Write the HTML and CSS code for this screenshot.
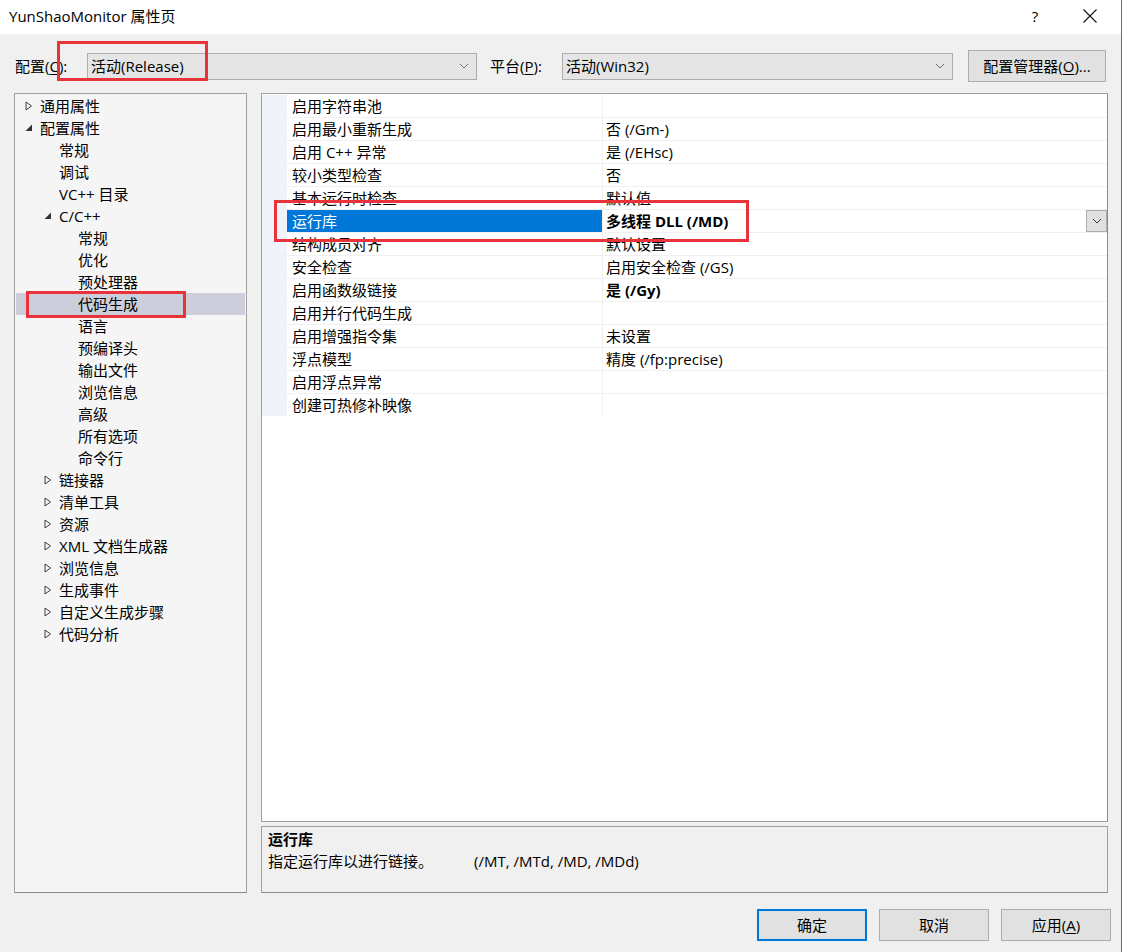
FILE: index.html
```html
<!DOCTYPE html>
<html lang="zh-CN">
<head>
<meta charset="utf-8">
<title>YunShaoMonitor 属性页</title>
<link rel="stylesheet" href="styles.css">
</head>
<body>
<div class="window">
  <div class="titlebar">
    <span class="title">YunShaoMonitor 属性页</span>
    <span class="tb-help">?</span>
    <span class="tb-close"><svg width="16" height="16" viewBox="0 0 16 16"><path d="M1.5 1.5 L14.5 14.5 M14.5 1.5 L1.5 14.5" stroke="#111" stroke-width="1.1" fill="none"/></svg></span>
  </div>

  <div class="toolbar">
    <span class="lbl">配置(<u>C</u>):</span>
    <div class="combo combo-config"><span class="combo-text">活动(Release)</span><svg class="chev" width="10" height="6" viewBox="0 0 10 6"><path d="M1 1 L5 5 L9 1" stroke="#707070" stroke-width="1" fill="none"/></svg></div>
    <span class="lbl lbl-platform">平台(<u>P</u>):</span>
    <div class="combo combo-platform"><span class="combo-text">活动(Win32)</span><svg class="chev" width="10" height="6" viewBox="0 0 10 6"><path d="M1 1 L5 5 L9 1" stroke="#707070" stroke-width="1" fill="none"/></svg></div>
    <button class="btn btn-mgr">配置管理器(<u>O</u>)...</button>
  </div>

  <div class="main">
    <div class="tree">
      <div class="node l0"><span class="tw"><svg width="8" height="10" viewBox="0 0 8 10"><path d="M1 1 L6.5 5 L1 9 Z" stroke="#3c3c3c" stroke-width="1" fill="none"/></svg></span>通用属性</div>
      <div class="node l0"><span class="tw"><svg width="8" height="8" viewBox="0 0 8 8"><path d="M7 0.5 L7 7 L0.5 7 Z" fill="#333"/></svg></span>配置属性</div>
      <div class="node l1"><span class="tw"></span>常规</div>
      <div class="node l1"><span class="tw"></span>调试</div>
      <div class="node l1"><span class="tw"></span>VC++ 目录</div>
      <div class="node l1"><span class="tw"><svg width="8" height="8" viewBox="0 0 8 8"><path d="M7 0.5 L7 7 L0.5 7 Z" fill="#333"/></svg></span>C/C++</div>
      <div class="node l2"><span class="tw"></span>常规</div>
      <div class="node l2"><span class="tw"></span>优化</div>
      <div class="node l2"><span class="tw"></span>预处理器</div>
      <div class="node l2 selected"><span class="tw"></span>代码生成</div>
      <div class="node l2"><span class="tw"></span>语言</div>
      <div class="node l2"><span class="tw"></span>预编译头</div>
      <div class="node l2"><span class="tw"></span>输出文件</div>
      <div class="node l2"><span class="tw"></span>浏览信息</div>
      <div class="node l2"><span class="tw"></span>高级</div>
      <div class="node l2"><span class="tw"></span>所有选项</div>
      <div class="node l2"><span class="tw"></span>命令行</div>
      <div class="node l1"><span class="tw"><svg width="8" height="10" viewBox="0 0 8 10"><path d="M1 1 L6.5 5 L1 9 Z" stroke="#3c3c3c" stroke-width="1" fill="none"/></svg></span>链接器</div>
      <div class="node l1"><span class="tw"><svg width="8" height="10" viewBox="0 0 8 10"><path d="M1 1 L6.5 5 L1 9 Z" stroke="#3c3c3c" stroke-width="1" fill="none"/></svg></span>清单工具</div>
      <div class="node l1"><span class="tw"><svg width="8" height="10" viewBox="0 0 8 10"><path d="M1 1 L6.5 5 L1 9 Z" stroke="#3c3c3c" stroke-width="1" fill="none"/></svg></span>资源</div>
      <div class="node l1"><span class="tw"><svg width="8" height="10" viewBox="0 0 8 10"><path d="M1 1 L6.5 5 L1 9 Z" stroke="#3c3c3c" stroke-width="1" fill="none"/></svg></span>XML 文档生成器</div>
      <div class="node l1"><span class="tw"><svg width="8" height="10" viewBox="0 0 8 10"><path d="M1 1 L6.5 5 L1 9 Z" stroke="#3c3c3c" stroke-width="1" fill="none"/></svg></span>浏览信息</div>
      <div class="node l1"><span class="tw"><svg width="8" height="10" viewBox="0 0 8 10"><path d="M1 1 L6.5 5 L1 9 Z" stroke="#3c3c3c" stroke-width="1" fill="none"/></svg></span>生成事件</div>
      <div class="node l1"><span class="tw"><svg width="8" height="10" viewBox="0 0 8 10"><path d="M1 1 L6.5 5 L1 9 Z" stroke="#3c3c3c" stroke-width="1" fill="none"/></svg></span>自定义生成步骤</div>
      <div class="node l1"><span class="tw"><svg width="8" height="10" viewBox="0 0 8 10"><path d="M1 1 L6.5 5 L1 9 Z" stroke="#3c3c3c" stroke-width="1" fill="none"/></svg></span>代码分析</div>
    </div>

    <div class="right">
      <div class="grid">
        <div class="prow"><span class="gut"></span><span class="pname">启用字符串池</span><span class="pval"></span></div>
        <div class="prow"><span class="gut"></span><span class="pname">启用最小重新生成</span><span class="pval">否 (/Gm-)</span></div>
        <div class="prow"><span class="gut"></span><span class="pname">启用 C++ 异常</span><span class="pval">是 (/EHsc)</span></div>
        <div class="prow"><span class="gut"></span><span class="pname">较小类型检查</span><span class="pval">否</span></div>
        <div class="prow"><span class="gut"></span><span class="pname">基本运行时检查</span><span class="pval">默认值</span></div>
        <div class="prow sel"><span class="gut"></span><span class="pname">运行库</span><span class="pval bold">多线程 DLL (/MD)<span class="dd"><svg width="10" height="6" viewBox="0 0 10 6"><path d="M1 1 L5 5 L9 1" stroke="#333" stroke-width="1" fill="none"/></svg></span></span></div>
        <div class="prow"><span class="gut"></span><span class="pname">结构成员对齐</span><span class="pval">默认设置</span></div>
        <div class="prow"><span class="gut"></span><span class="pname">安全检查</span><span class="pval">启用安全检查 (/GS)</span></div>
        <div class="prow"><span class="gut"></span><span class="pname">启用函数级链接</span><span class="pval bold">是 (/Gy)</span></div>
        <div class="prow"><span class="gut"></span><span class="pname">启用并行代码生成</span><span class="pval"></span></div>
        <div class="prow"><span class="gut"></span><span class="pname">启用增强指令集</span><span class="pval">未设置</span></div>
        <div class="prow"><span class="gut"></span><span class="pname">浮点模型</span><span class="pval">精度 (/fp:precise)</span></div>
        <div class="prow"><span class="gut"></span><span class="pname">启用浮点异常</span><span class="pval"></span></div>
        <div class="prow"><span class="gut"></span><span class="pname">创建可热修补映像</span><span class="pval"></span></div>
      </div>
      <div class="desc">
        <div class="desc-title">运行库</div>
        <div class="desc-text"><span class="desc-main">指定运行库以进行链接。</span><span>(/MT, /MTd, /MD, /MDd)</span></div>
      </div>
    </div>
  </div>

  <div class="footer">
    <button class="btn fbtn default">确定</button>
    <button class="btn fbtn">取消</button>
    <button class="btn fbtn">应用(<u>A</u>)</button>
  </div>

  <div class="annot annot-config"></div>
  <div class="annot annot-tree"></div>
  <div class="annot annot-row"></div>
</div>
</body>
</html>
```

FILE: styles.css
```css
* { box-sizing: border-box; }
html, body { margin: 0; padding: 0; }
body {
  background: #f0f0f0;
  font-family: "Open Sans", "Noto Sans CJK SC", sans-serif;
  font-size: 15px;
  color: #000;
}
u { text-decoration: underline; text-underline-offset: 2px; }

.window {
  position: relative;
  width: 1122px;
  height: 952px;
  background: #f0f0f0;
  border-right: 1px solid #6e6e6e;
  overflow: hidden;
}

.titlebar {
  height: 34px;
  background: #fff;
  display: flex;
  align-items: center;
  padding-left: 9px;
}
.title { flex: 1; line-height: 20px; margin-top: -2px; }
.tb-help { width: 20px; text-align: center; margin-right: 37px; line-height: 20px; margin-top: -2px; }
.tb-close { width: 16px; height: 16px; margin-right: 23px; display: flex; margin-top: -2px; }

.toolbar {
  display: flex;
  align-items: center;
  height: 32px;
  margin-top: 16px;
  padding-left: 15px;
}
.lbl { width: 72px; line-height: 20px; }
.lbl-platform { margin-left: 13px; }
.combo {
  height: 27px;
  background: #e5e5e5;
  border: 1px solid #adadad;
  display: flex;
  align-items: center;
  padding-left: 3px;
  padding-right: 7px;
}
.combo-config { width: 390px; }
.combo-platform { width: 391px; }
.combo-text { flex: 1; line-height: 20px; }
.chev { display: block; }

.btn {
  font-family: inherit;
  font-size: 15px;
  color: #000;
  background: #e1e1e1;
  border: 1px solid #adadad;
  padding: 0;
  height: 32px;
  line-height: 20px;
}
.btn-mgr { width: 138px; margin-left: 15px; }

.main {
  display: flex;
  gap: 14px;
  margin-top: 11px;
  margin-left: 14px;
  height: 800px;
}

.tree {
  width: 233px;
  height: 800px;
  background: #f5f5f5;
  border: 1px solid #a0a0a0;
  border-bottom-color: #8a8a8a;
  padding: 1px;
}
.node {
  height: 22px;
  line-height: 22px;
  display: flex;
  align-items: center;
  white-space: nowrap;
}
.node.l0 { padding-left: 4px; }
.node.l1 { padding-left: 23px; }
.node.l2 { padding-left: 42px; }
.node.selected { background: #cccedb; }
.tw {
  width: 20px;
  height: 22px;
  display: flex;
  align-items: center;
  padding-left: 5px;
  flex-shrink: 0;
}
.tw svg { display: block; }

.right {
  width: 847px;
  display: flex;
  flex-direction: column;
  gap: 4px;
}
.grid {
  height: 729px;
  background: #fff;
  border: 1px solid #a0a0a0;
  border-right-color: #8a8a8a;
}
.prow {
  display: flex;
  height: 23px;
  border-top: 1px solid #f0f0f0;
}
.prow:first-child { border-top-color: #fff; }
.gut { width: 25px; background: #f0f4fa; flex-shrink: 0; }
.pname {
  width: 316px;
  padding-left: 5px;
  line-height: 22px;
  border-right: 1px solid #f0f0f0;
  white-space: nowrap;
}
.pval {
  flex: 1;
  padding-left: 3px;
  line-height: 22px;
  display: flex;
  align-items: center;
  white-space: nowrap;
}
.bold { font-weight: bold; }
.prow.sel .pname { background: #0078d7; color: #fff; }
.dd {
  margin-left: auto;
  width: 21px;
  height: 22px;
  background: #e1e1e1;
  border: 1px solid #adadad;
  display: flex;
  align-items: center;
  justify-content: center;
}
.dd svg { display: block; }

.desc {
  height: 67px;
  background: #f0f0f0;
  border: 1px solid #a0a0a0;
  border-bottom-color: #8a8a8a;
  padding: 1px 6px 0;
}
.desc-title { font-weight: bold; line-height: 22px; }
.desc-text { line-height: 23px; white-space: nowrap; }
.desc-main { display: inline-block; width: 206px; }

.footer {
  display: flex;
  justify-content: flex-end;
  gap: 12px;
  margin-top: 16px;
  padding-right: 10px;
}
.fbtn { width: 110px; }
.fbtn.default { border: 2px solid #0078d7; }

.annot {
  position: absolute;
  border: 3px solid #e8333b;
  pointer-events: none;
}
.annot-config { left: 57px; top: 41px; width: 151px; height: 40px; }
.annot-tree { left: 26px; top: 291px; width: 160px; height: 27px; }
.annot-row { left: 274px; top: 200px; width: 475px; height: 42px; }
```
